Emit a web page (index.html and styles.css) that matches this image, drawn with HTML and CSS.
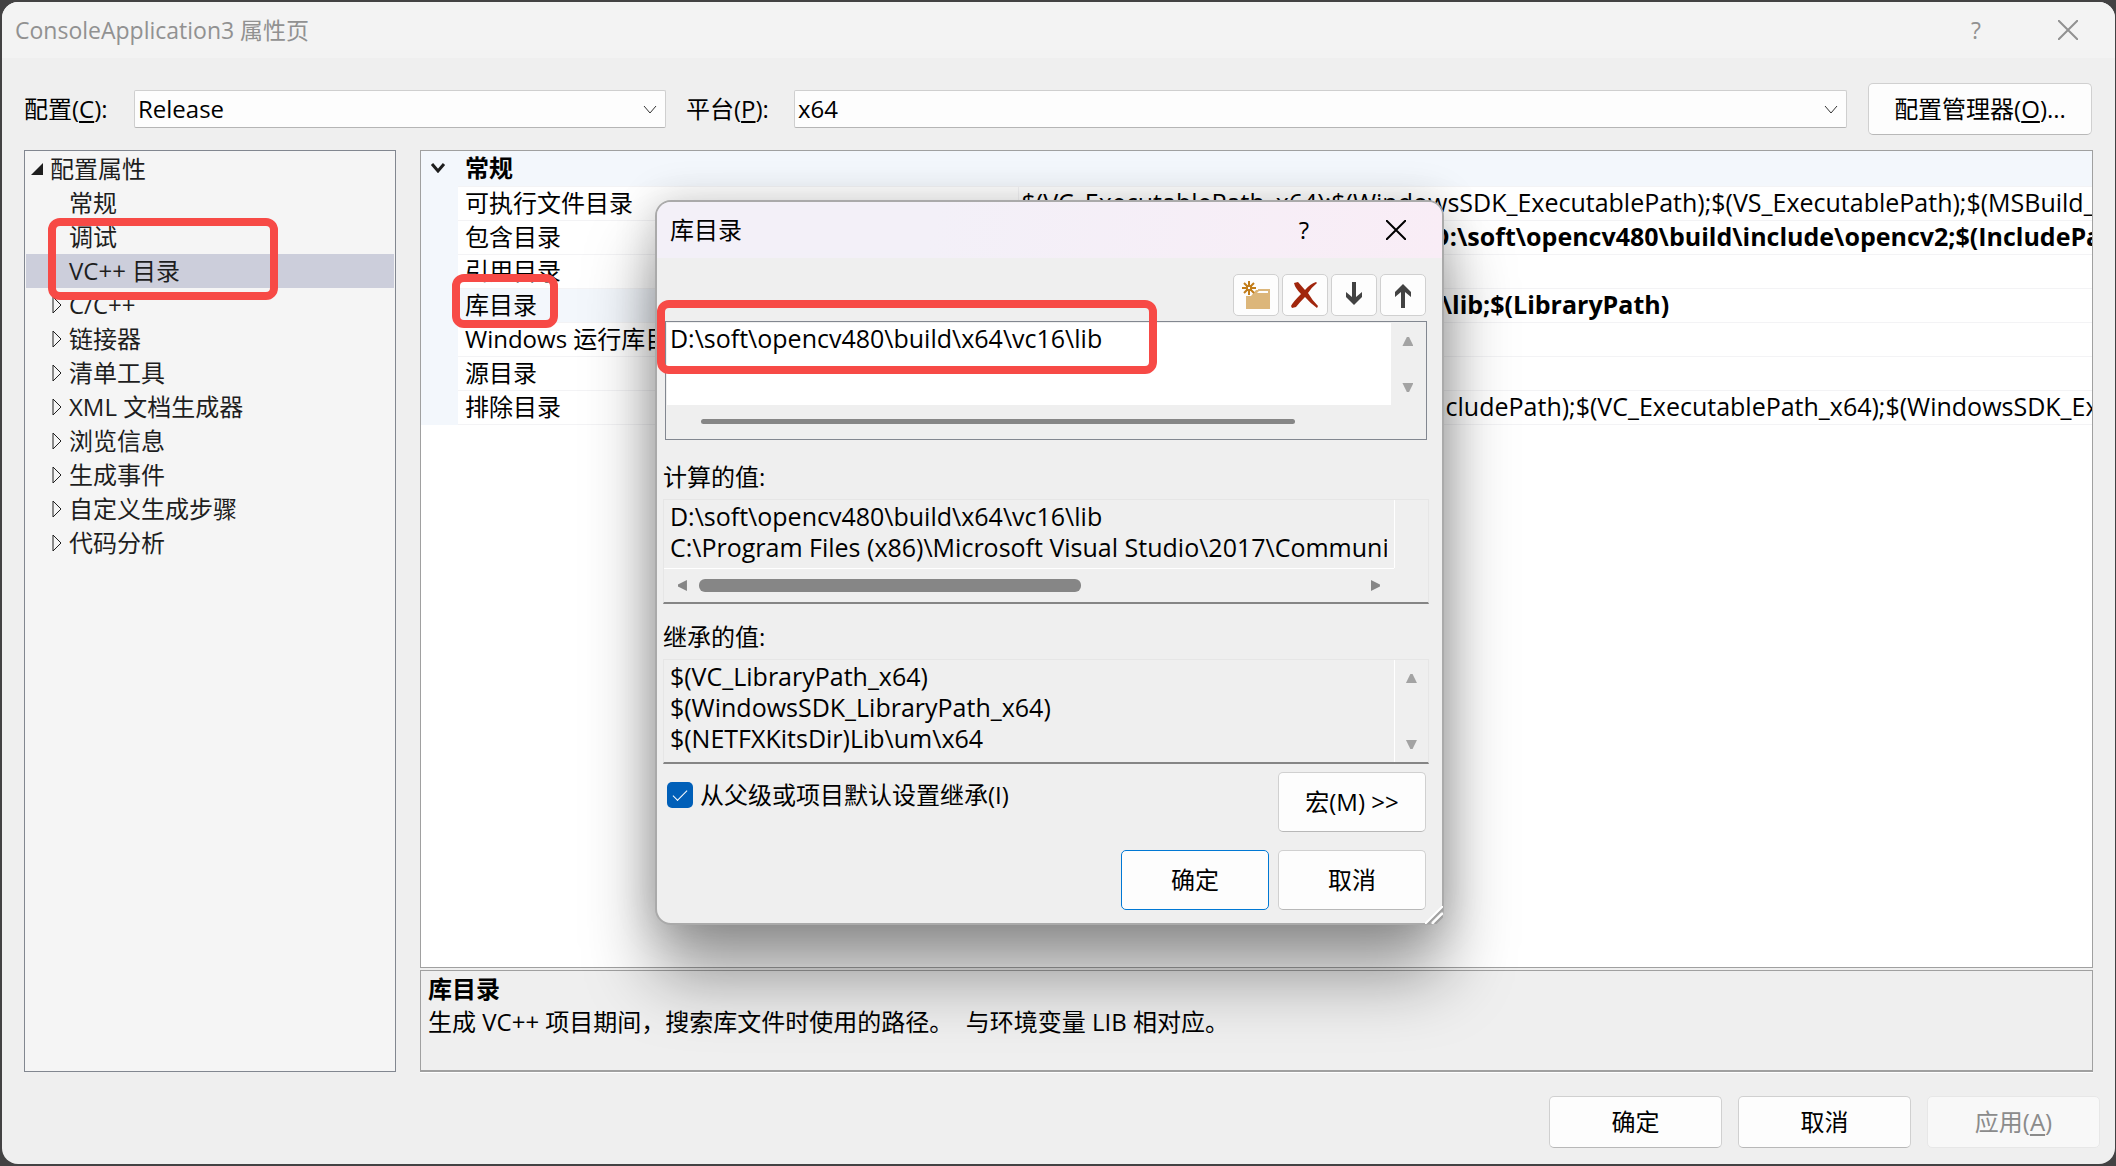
FILE: index.html
```html
<!DOCTYPE html>
<html lang="zh-CN">
<head>
<meta charset="utf-8">
<meta name="viewport" content="width=device-width, initial-scale=1">
<title>ConsoleApplication3 属性页</title>
<link rel="stylesheet" href="styles.css">
</head>
<body>
<main class="window">
  <header class="titlebar titlebar-inactive">
    <h1 class="title">ConsoleApplication3 属性页</h1>
    <button class="caption-btn" aria-label="帮助">?</button>
    <button class="caption-btn" aria-label="关闭"><svg width="20" height="20" viewBox="0 0 20 20"><path d="M0 0L20 20M20 0L0 20"/></svg></button>
  </header>

  <div class="config-bar">
    <label class="config-label" for="config">配置(<u>C</u>):</label>
    <span class="combo combo-config">
      <select id="config"><option>Release</option><option>Debug</option></select>
      <svg class="combo-arrow" width="14" height="10" viewBox="0 0 14 10"><path d="M1 1L7 8L13 1"/></svg>
    </span>
    <label class="config-label" for="platform">平台(<u>P</u>):</label>
    <span class="combo combo-platform">
      <select id="platform"><option>x64</option><option>Win32</option></select>
      <svg class="combo-arrow" width="14" height="10" viewBox="0 0 14 10"><path d="M1 1L7 8L13 1"/></svg>
    </span>
    <button class="btn btn-manager">配置管理器(<u>O</u>)...</button>
  </div>

  <div class="panes">
    <nav class="tree-pane">
      <ul class="tree">
        <li class="node root"><svg class="twisty-open" width="12" height="12" viewBox="0 0 12 12"><path d="M12 0V12H0Z"/></svg>配置属性</li>
        <li class="node">常规</li>
        <li class="node">调试</li>
        <li class="node selected">VC++ 目录</li>
        <li class="node"><svg class="twisty" width="10" height="18" viewBox="0 0 10 18"><path d="M1 1L9 9L1 17Z"/></svg>C/C++</li>
        <li class="node"><svg class="twisty" width="10" height="18" viewBox="0 0 10 18"><path d="M1 1L9 9L1 17Z"/></svg>链接器</li>
        <li class="node"><svg class="twisty" width="10" height="18" viewBox="0 0 10 18"><path d="M1 1L9 9L1 17Z"/></svg>清单工具</li>
        <li class="node"><svg class="twisty" width="10" height="18" viewBox="0 0 10 18"><path d="M1 1L9 9L1 17Z"/></svg>XML 文档生成器</li>
        <li class="node"><svg class="twisty" width="10" height="18" viewBox="0 0 10 18"><path d="M1 1L9 9L1 17Z"/></svg>浏览信息</li>
        <li class="node"><svg class="twisty" width="10" height="18" viewBox="0 0 10 18"><path d="M1 1L9 9L1 17Z"/></svg>生成事件</li>
        <li class="node"><svg class="twisty" width="10" height="18" viewBox="0 0 10 18"><path d="M1 1L9 9L1 17Z"/></svg>自定义生成步骤</li>
        <li class="node"><svg class="twisty" width="10" height="18" viewBox="0 0 10 18"><path d="M1 1L9 9L1 17Z"/></svg>代码分析</li>
      </ul>
      <span class="mark mark-tree"></span>
    </nav>

    <div class="right-pane">
      <section class="grid-pane">
        <table class="props">
          <colgroup><col class="col-gutter"><col class="col-name"><col></colgroup>
          <tbody>
            <tr class="category"><td class="gutter"><svg width="16" height="10" viewBox="0 0 16 10"><path d="M2 1L8 8L14 1"/></svg></td><th colspan="2">常规</th></tr>
            <tr><td class="gutter"></td><td>可执行文件目录</td><td>$(VC_ExecutablePath_x64);$(WindowsSDK_ExecutablePath);$(VS_ExecutablePath);$(MSBuild_ExecutablePath)</td></tr>
            <tr><td class="gutter"></td><td>包含目录</td><td class="changed">D:\soft\opencv480\build\include;D:\soft\opencv480\build\include\opencv2;$(IncludePath)</td></tr>
            <tr><td class="gutter"></td><td>引用目录</td><td></td></tr>
            <tr><td class="gutter"></td><td class="current">库目录</td><td class="changed">D:\soft\opencv480\build\x64\vc16\lib;$(LibraryPath)</td></tr>
            <tr><td class="gutter"></td><td>Windows 运行库目录</td><td></td></tr>
            <tr><td class="gutter"></td><td>源目录</td><td></td></tr>
            <tr><td class="gutter"></td><td>排除目录</td><td>$(VC_IncludePath);$(WindowsSDK_IncludePath);$(VC_ExecutablePath_x64);$(WindowsSDK_ExecutablePath)</td></tr>
          </tbody>
        </table>
        <span class="mark mark-grid"></span>
      </section>
      <section class="description">
        <h2>库目录</h2>
        <p>生成 VC++ 项目期间，搜索库文件时使用的路径。&nbsp; 与环境变量 LIB 相对应。</p>
      </section>
    </div>
  </div>

  <footer class="actions">
    <button class="btn">确定</button>
    <button class="btn">取消</button>
    <button class="btn" disabled>应用(<u>A</u>)</button>
  </footer>
</main>

<section class="dialog" role="dialog" aria-labelledby="dlg-title">
  <header class="titlebar titlebar-active">
    <h2 class="title" id="dlg-title">库目录</h2>
    <button class="caption-btn" aria-label="帮助">?</button>
    <button class="caption-btn" aria-label="关闭"><svg width="20" height="20" viewBox="0 0 20 20"><path d="M0 0L20 20M20 0L0 20"/></svg></button>
  </header>
  <div class="dialog-body">
    <div class="toolbar">
      <button class="tool" aria-label="新行"><svg width="30" height="30" viewBox="0 0 30 30"><path fill="#dcb67a" d="M5 16H10L15 10H17V9H29V29H5Z"/><path fill="#fdfdfd" d="M18 11H27V13H16Z"/><path stroke="#c27d1a" stroke-width="2" d="M8 1V6M8 10V15M1 8H6M10 8H15M3 3L6 6M13 3L10 6M3 13L6 10M13 13L10 10"/><path fill="#c27d1a" d="M5 5H11V11H5Z"/><path fill="#fdfdfd" d="M7 7H9V9H7Z"/></svg></button>
      <button class="tool" aria-label="删除"><svg width="30" height="30" viewBox="0 0 30 30"><path fill="#a1260d" d="M4 3L8 2L15 10Q20 4 26 2L27 3Q22 7 18 13Q22 20 28 26L27 28Q21 24 15 17Q10 22 6 27L2 28L1 26Q3 22 11 14Q5 8 4 3Z"/></svg></button>
      <button class="tool" aria-label="下移"><svg width="30" height="30" viewBox="0 0 30 30"><path fill="#424242" d="M13 2H17V17L23 12V17L15 25L7 17V12L13 17Z"/></svg></button>
      <button class="tool" aria-label="上移"><svg width="30" height="30" viewBox="0 0 30 30"><path fill="#424242" d="M13 28H17V12L23 17V12L15 4L7 12V17L13 12Z"/></svg></button>
    </div>

    <div class="listbox edit-box">
      <textarea aria-label="库目录" wrap="off">D:\soft\opencv480\build\x64\vc16\lib</textarea>
      <div class="vscroll"><i class="tri up"></i><i class="tri down"></i></div>
      <div class="hscroll"><i class="thumb thin"></i></div>
      <span class="mark mark-edit"></span>
    </div>

    <label class="field-label" for="evaluated">计算的值:</label>
    <div class="listbox flat">
      <textarea id="evaluated" wrap="off" rows="2" readonly>D:\soft\opencv480\build\x64\vc16\lib
C:\Program Files (x86)\Microsoft Visual Studio\2017\Community\VC\Tools\MSVC</textarea>
      <div class="vscroll"></div>
      <div class="hscroll"><i class="tri left"></i><i class="thumb"></i><i class="tri right"></i></div>
    </div>

    <label class="field-label" for="inherited">继承的值:</label>
    <div class="listbox flat">
      <textarea id="inherited" wrap="off" rows="3" readonly>$(VC_LibraryPath_x64)
$(WindowsSDK_LibraryPath_x64)
$(NETFXKitsDir)Lib\um\x64</textarea>
      <div class="vscroll"><i class="tri up"></i><i class="tri down"></i></div>
    </div>

    <div class="inherit-row">
      <label class="check"><input type="checkbox" checked>从父级或项目默认设置继承(I)</label>
      <button class="btn">宏(M) &gt;&gt;</button>
    </div>
    <div class="dialog-actions">
      <button class="btn default">确定</button>
      <button class="btn">取消</button>
    </div>
  </div>
  <svg class="grip" width="18" height="18" viewBox="0 0 18 18"><path stroke="#fff" stroke-width="2" d="M0 18L18 0M7 18L18 7"/><path stroke="#a0a0a0" stroke-width="2" d="M3 18L18 3M10 18L18 10"/></svg>
</section>
</body>
</html>
```
FILE: styles.css
```css
* { box-sizing: border-box; }

body {
  margin: 0;
  padding: 2px 1px 2px 2px;
  min-height: 100vh;
  display: flex;
  position: relative;
  overflow: hidden;
  background: #434243;
  color: #000;
  font: 24px/34px "Open Sans", "Noto Sans CJK SC", sans-serif;
}

button, select, textarea, input { font: inherit; color: inherit; }
h1, h2, p, ul { margin: 0; padding: 0; font: inherit; }
svg { display: block; fill: none; }
u { text-underline-offset: 3px; text-decoration-thickness: 2px; }

.window {
  flex: 1;
  min-width: 0;
  display: flex;
  flex-direction: column;
  border-radius: 16px;
  overflow: hidden;
  background: #efefef;
}

/* Title bars */
.titlebar { display: flex; align-items: center; height: 56px; flex: none; }
.title { flex: 1; }
.caption-btn {
  width: 92px;
  height: 56px;
  padding: 0;
  border: 0;
  background: none;
  display: grid;
  place-items: center;
}
.caption-btn path { stroke: currentColor; stroke-width: 2; }
.titlebar-inactive { padding: 0 1px 0 13px; background: #f3f3f3; color: #919191; font-size: 23px; }
.titlebar-active { padding-left: 13px; background: linear-gradient(100deg, #f3f0f8 35%, #f9edf6); }

/* Configuration row */
.config-bar { display: flex; align-items: center; height: 52px; margin: 25px 23px 0 22px; }
.config-label { flex: none; width: 110px; }
.combo { display: flex; position: relative; }
.combo-config { width: 532px; margin-right: 20px; }
.combo-platform { flex: 1; margin-right: 21px; }
.config-bar .config-label + .combo-platform { margin-left: -2px; }
.combo select {
  appearance: none;
  width: 100%;
  height: 38px;
  padding: 0 32px 0 3px;
  line-height: 34px;
  border: 1px solid #cfcfcf;
  border-bottom-color: #b5b5b5;
  border-radius: 2px;
  background: #fdfdfd;
}
.combo-arrow { position: absolute; right: 9px; top: 15px; pointer-events: none; }
.combo-arrow path { stroke: #333; stroke-width: 1; }

.btn {
  padding: 0;
  border: 1px solid #d0d0d0;
  border-bottom-color: #b8b8b8;
  border-radius: 5px;
  background: #fdfdfd;
}
.btn:disabled { color: #8b8b8b; border-color: #e7e7e7; background: #f8f8f8; }
.btn.default { border-color: #0078d4; }
.btn-manager { width: 224px; height: 52px; }

/* Panes */
.panes { flex: 1; display: flex; gap: 24px; margin: 15px 22px 0; min-height: 0; }
.tree-pane { position: relative; width: 372px; border: 1px solid #828790; padding: 1px; background: #f5f5f5; color: #1e1e1e; }
.tree { list-style: none; }
.node { position: relative; height: 34px; padding-left: 43px; }
.node.root { padding-left: 24px; }
.node.selected { background: #cccedb; }
.twisty { position: absolute; left: 26px; top: 8px; }
.twisty path { stroke: #1e1e1e; stroke-width: 1; }
.twisty-open { position: absolute; left: 5px; top: 11px; fill: #1e1e1e; }

.right-pane { flex: 1; min-width: 0; display: flex; flex-direction: column; gap: 2px; }
.grid-pane { position: relative; flex: 1; border: 1px solid #a0a0a0; background: #fff; }
.props { width: 100%; table-layout: fixed; border-collapse: collapse; }
.col-gutter { width: 37px; }
.col-name { width: 560px; }
.props td, .props th {
  height: 34px;
  padding: 0 0 0 7px;
  border-bottom: 1px solid #f3f3f5;
  line-height: 31px;
  text-align: left;
  vertical-align: top;
  white-space: nowrap;
  overflow: hidden;
}
.props td:nth-child(2) { border-right: 1px solid #f3f3f5; }
.props td:nth-child(3) { padding-left: 3px; font-size: 25px; }
.props .gutter, .props .category th, .props .current { background: #f3f7fc; }
.props .gutter { padding: 0 0 0 9px; border-color: #f3f7fc; vertical-align: middle; }
.gutter path { stroke: #1e1e1e; stroke-width: 3; }
.props .category > * { height: 35px; line-height: 34px; }
.changed, .description h2 { font-weight: bold; }

.description { height: 102px; padding: 1px 7px; border: 1px solid #a0a0a0; border-bottom: 2px solid #a0a0a0; box-shadow: 0 1px #fff; line-height: 33px; }

.actions { display: flex; justify-content: flex-end; gap: 16px; padding: 24px 15px 16px; }
.actions .btn { width: 173px; height: 52px; }

/* Dialog */
.dialog {
  position: absolute;
  left: calc(31% - 1px);
  top: 200px;
  width: 789px;
  border: 2px solid #aaa;
  border-radius: 16px;
  background: #efefef;
  box-shadow: 0 50px 70px rgba(0, 0, 0, .4), 0 0 40px rgba(0, 0, 0, .18);
}
.titlebar-active { border-radius: 14px 14px 0 0; }
.dialog-body { display: flex; flex-direction: column; padding: 16px 13px 13px 6px; }
.toolbar { display: flex; justify-content: flex-end; gap: 3px; margin: 0 3px 5px 0; }
.tool { display: grid; place-items: center; width: 46px; height: 42px; padding: 0; border: 1px solid #d0d0d0; border-radius: 5px; background: #fdfdfd; }

.listbox { position: relative; display: grid; grid-template-columns: 1fr 34px; }
.listbox textarea { display: block; width: 100%; margin: 0; padding: 0; border: 0; outline: 0; resize: none; overflow: hidden; font-size: 25px; line-height: 31px; background: #fff; }
.edit-box { margin: 0 2px 4px; border: 1px solid #828790; padding: 1px; grid-template-rows: 82px 33px; }
.edit-box textarea { padding: 0 0 0 3px; }
.flat { height: 105px; border: 1px solid #e6e6e6; border-bottom: 2px solid #858585; }
.flat textarea { width: auto; margin-right: 7px; padding: 1px 0 0 6px; background: none; }
.flat .vscroll { border-left: 1px solid #fff; }
.flat .hscroll { border-top: 1px solid #fff; }
.flat:has(.hscroll) { grid-template-rows: 68px 34px; }

.vscroll { display: flex; flex-direction: column; justify-content: space-between; align-items: center; padding: 14px 0 13px; }
.hscroll { display: flex; align-items: center; padding: 0 14px; }
.edit-box .hscroll { padding: 0 34px; }
.thumb { height: 13px; width: 382px; margin: 0 auto 0 12px; border-radius: 6px; background: #868686; }
.thumb.thin { height: 5px; width: 594px; margin: 0; border-radius: 3px; }
.tri { width: 11px; height: 9px; background: #a3a3a3; }
.up { clip-path: polygon(40% 0, 60% 0, 100% 100%, 0 100%); }
.down { clip-path: polygon(0 0, 100% 0, 60% 100%, 40% 100%); }
.left, .right { width: 9px; height: 11px; background: #868686; }
.left { clip-path: polygon(0 40%, 0 60%, 100% 100%, 100% 0); }
.right { clip-path: polygon(100% 40%, 100% 60%, 0 100%, 0 0); }

.field-label { margin: 16px 0 5px; }
.inherit-row { display: flex; justify-content: space-between; align-items: flex-start; margin: 8px 3px 18px 4px; }
.check { display: flex; align-items: center; gap: 7px; margin-top: 6px; }
.check input { appearance: none; width: 26px; height: 26px; margin: 0; border-radius: 5px; background: #005fb8; display: grid; place-items: center; }
.check input::before { content: ""; width: 13px; height: 6px; margin-top: -4px; border: solid #fff; border-width: 0 0 1px 1px; transform: rotate(-45deg); }
.dialog-body .btn { width: 148px; height: 60px; }
.dialog-actions { display: flex; justify-content: flex-end; gap: 9px; margin-right: 3px; }
.grip { position: absolute; right: -1px; bottom: -1px; }

/* Highlight frames laid over the steps to follow */
.mark { position: absolute; border: 8px solid #f74a46; border-radius: 12px; pointer-events: none; }
.mark-tree { left: 23px; top: 67px; width: 230px; height: 82px; }
.mark-grid { left: 31px; top: 123px; width: 106px; height: 54px; }
.mark-edit { left: -9px; top: -22px; width: 500px; height: 74px; }
```
